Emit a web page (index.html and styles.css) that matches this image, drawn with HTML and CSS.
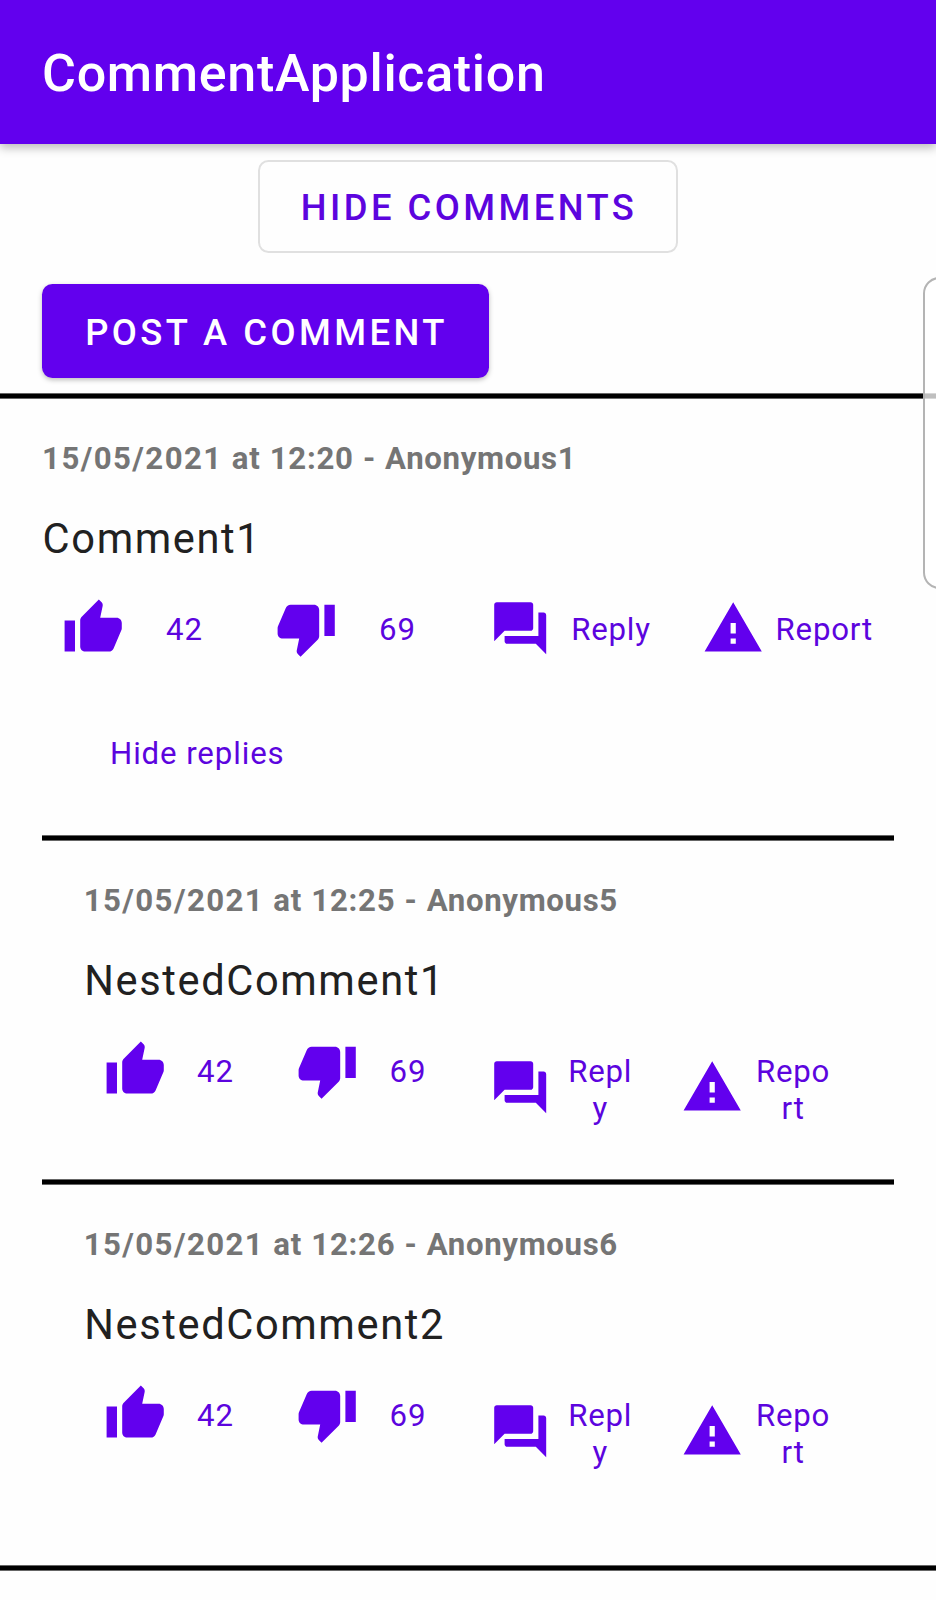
FILE: index.html
```html
<!DOCTYPE html>
<html lang="en">
<head>
<meta charset="utf-8">
<title>CommentApplication</title>
<link rel="stylesheet" href="styles.css">
</head>
<body>
<svg class="sprite" aria-hidden="true">
  <symbol id="like" viewBox="0 0 24 24"><path d="M1 21h4V9H1v12zm22-11c0-1.1-.9-2-2-2h-6.31l.95-4.57.03-.32c0-.41-.17-.79-.44-1.06L14.17 1 7.59 7.59C7.22 7.95 7 8.45 7 9v10c0 1.1.9 2 2 2h9c.83 0 1.54-.5 1.84-1.22l3.02-7.05c.09-.23.14-.47.14-.73v-2z"/></symbol>
  <symbol id="dislike" viewBox="0 0 24 24"><path d="M15 3H6c-.83 0-1.54.5-1.84 1.22l-3.02 7.05c-.09.23-.14.47-.14.73v2c0 1.1.9 2 2 2h6.31l-.95 4.57-.03.32c0 .41.17.79.44 1.06L9.83 23l6.59-6.59c.36-.36.58-.86.58-1.41V5c0-1.1-.9-2-2-2zm4 0v12h4V3h-4z"/></symbol>
  <symbol id="reply" viewBox="0 0 24 24"><path d="M21 6h-2v9H6v2c0 .55.45 1 1 1h11l4 4V7c0-.55-.45-1-1-1zm-4 6V3c0-.55-.45-1-1-1H3c-.55 0-1 .45-1 1v14l4-4h10c.55 0 1-.45 1-1z"/></symbol>
  <symbol id="report" viewBox="0 0 24 24"><path d="M1 21h22L12 2 1 21zm12-3h-2v-2h2v2zm0-4h-2v-4h2v4z"/></symbol>
</svg>

<header class="app-bar"><h1 class="app-title">CommentApplication</h1></header>

<main class="content">
  <button class="btn btn-outlined">HIDE COMMENTS</button>
  <button class="btn btn-filled">POST A COMMENT</button>
  <div class="divider"></div>

  <article class="comment">
    <p class="meta"><span class="date">15/05/2021</span> at 12:20 - <span class="author">Anonymous1</span></p>
    <p class="text">Comment1</p>
    <div class="actions">
      <svg class="icon"><use href="#like"/></svg><span class="label">42</span>
      <svg class="icon"><use href="#dislike"/></svg><span class="label">69</span>
      <svg class="icon"><use href="#reply"/></svg><span class="label word">Reply</span>
      <svg class="icon"><use href="#report"/></svg><span class="label word">Report</span>
    </div>
    <a class="toggle">Hide replies</a>
  </article>

  <section class="replies">
    <div class="divider"></div>
    <article class="comment nested">
      <p class="meta"><span class="date">15/05/2021</span> at 12:25 - <span class="author">Anonymous5</span></p>
      <p class="text">NestedComment1</p>
      <div class="actions">
        <svg class="icon"><use href="#like"/></svg><span class="label">42</span>
        <svg class="icon"><use href="#dislike"/></svg><span class="label">69</span>
        <svg class="icon low"><use href="#reply"/></svg><span class="label word wrap-reply">Reply</span>
        <svg class="icon low"><use href="#report"/></svg><span class="label word wrap-report">Report</span>
      </div>
    </article>
    <div class="divider"></div>
    <article class="comment nested last">
      <p class="meta"><span class="date">15/05/2021</span> at 12:26 - <span class="author">Anonymous6</span></p>
      <p class="text">NestedComment2</p>
      <div class="actions">
        <svg class="icon"><use href="#like"/></svg><span class="label">42</span>
        <svg class="icon"><use href="#dislike"/></svg><span class="label">69</span>
        <svg class="icon low"><use href="#reply"/></svg><span class="label word wrap-reply">Reply</span>
        <svg class="icon low"><use href="#report"/></svg><span class="label word wrap-report">Report</span>
      </div>
    </article>
  </section>
  <div class="divider"></div>
</main>
<div class="edge-handle"></div>
</body>
</html>
```

FILE: styles.css
```css
* { box-sizing: border-box; }

body {
  margin: 0;
  width: 936px;
  height: 1600px;
  overflow: hidden;
  position: relative;
  background: #fefefe;
  font-family: Roboto, "Liberation Sans", sans-serif;
}

.sprite { display: none; }

.app-bar {
  height: 144px;
  padding: 4px 0 0 42px;
  display: flex;
  align-items: center;
  background: #6200ee;
  box-shadow: 0 4px 9px rgba(0, 0, 0, 0.26);
}

.app-title {
  margin: 0;
  color: #fff;
  font-size: 52px;
  font-weight: 500;
  line-height: 60px;
  letter-spacing: 0.68px;
}

.content {
  display: flex;
  flex-direction: column;
  padding-top: 16px;
}

.btn {
  font: 500 36.4px/40px Roboto, "Liberation Sans", sans-serif;
  letter-spacing: 3.45px;
  white-space: nowrap;
  border-radius: 10.4px;
  padding: 3px 0 0 2px;
}

.btn-outlined {
  align-self: center;
  width: 420px;
  height: 93px;
  border: 2px solid #e0e0e0;
  background: transparent;
  color: #5c04de;
}

.btn-filled {
  width: 447px;
  height: 94px;
  margin: 31px 0 15px 42px;
  border: 0;
  background: #6200ee;
  color: #fff;
  box-shadow: 0 2px 5px rgba(0, 0, 0, 0.26);
}

.divider {
  height: 6px;
  background: linear-gradient(#666 1px, #000 1px 5px, #666 5px);
}

.comment {
  height: 436px;
  padding: 42px 0 0 41.6px;
}

.meta {
  margin: 0 0 38px 0.5px;
  color: #757575;
  font-size: 31.2px;
  font-weight: 700;
  line-height: 36px;
  letter-spacing: 0.75px;
  word-spacing: 0.65px;
}

.date { letter-spacing: 1.42px; }

.author { letter-spacing: 0.65px; }

.text {
  margin: 0 0 33.5px 1px;
  color: #212121;
  font-size: 41.6px;
  line-height: 48px;
  letter-spacing: 1.62px;
}

.actions {
  display: grid;
  grid-template-columns: 103.6px 109.4px 103.6px 109.8px 81.2px 132.4px 72px auto;
  align-items: start;
  height: 62px;
  margin-left: 20.8px;
}

.icon {
  width: 62.4px;
  height: 62.4px;
  fill: #6200ee;
}

.icon.low { margin-top: 17px; }

.label,
.toggle {
  color: #5c04de;
  font-size: 31.2px;
  line-height: 36.5px;
  letter-spacing: 1.04px;
}

.label { margin-top: 15.5px; }

.word {
  padding-left: 1.2px;
  letter-spacing: 0.8px;
}

.toggle {
  display: block;
  margin: 77.5px 0 0 68.4px;
  letter-spacing: 0.9px;
}

.replies { padding: 0 41.6px; }

.nested { height: 338px; }

.nested.last { height: 380px; }

.nested .actions {
  grid-template-columns: 93px 99.4px 93px 99.4px 75.2px 117.4px 73px auto;
}

.wrap-reply,
.wrap-report {
  width: 72px;
  padding-left: 0.5px;
  text-align: center;
  word-break: break-all;
}

.wrap-report { width: 77px; }

.edge-handle {
  position: absolute;
  top: 277px;
  right: -20px;
  width: 33px;
  height: 312px;
  border: 2px solid #b4b4b4;
  border-radius: 18px;
  background: rgba(255, 255, 255, 0.75);
}
```
